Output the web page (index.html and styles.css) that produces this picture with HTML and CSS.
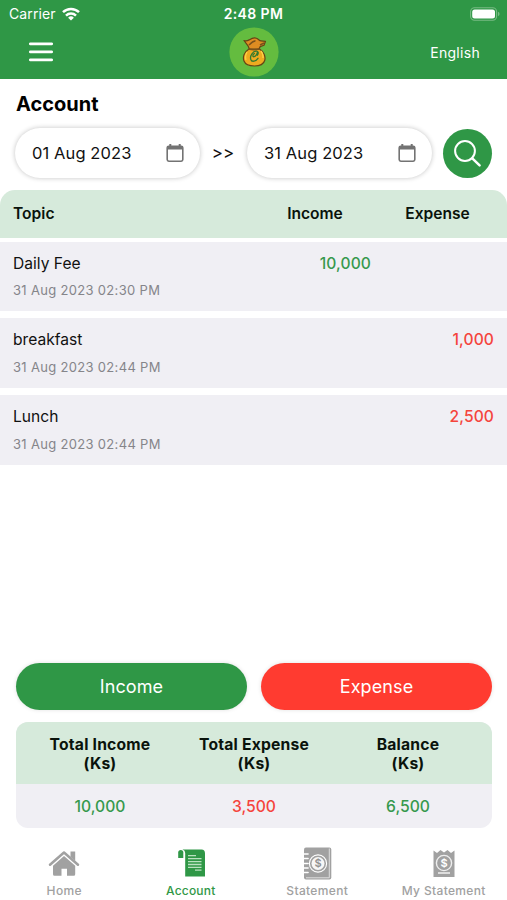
FILE: index.html
```html
<!DOCTYPE html>
<html lang="en">
<head>
<meta charset="utf-8">
<title>Account</title>
<link rel="stylesheet" href="styles.css">
</head>
<body>
<div class="app">
  <header class="top">
    <div class="status">
      <div class="carrier"><span>Carrier</span>
        <svg class="wifi" viewBox="0 0 18 14" width="18" height="14"><g fill="none" stroke="#fff" stroke-width="2.5"><path d="M1 5.2a11.6 11.6 0 0 1 16 0"/><path d="M4 8.6a7.2 7.2 0 0 1 10 0"/></g><path fill="#fff" d="M9 13.6 6.1 10.7a4.1 4.1 0 0 1 5.8 0z"/></svg>
      </div>
      <div class="clock">2:48 PM</div>
      <svg class="battery" viewBox="0 0 30 14" width="30" height="14"><rect x=".6" y=".8" width="26" height="12.4" rx="4" fill="none" stroke="#78bb84" stroke-width="1.1"/><rect x="2.2" y="2.4" width="22.8" height="9.2" rx="2.5" fill="#fff"/><path d="M28 4.8q1.6.6 1.6 2.2T28 9.2z" fill="#78bb84"/></svg>
    </div>
    <div class="bar">
      <div class="menu"><svg viewBox="0 0 24 20" width="24" height="20"><path d="M1.3 1.8h21.4M1.3 9.9h21.4M1.3 17.9h21.4" stroke="#fff" stroke-width="2.7" stroke-linecap="round"/></svg></div>
      <svg class="logo" viewBox="0 0 50 50" width="50" height="50">
        <circle cx="25" cy="25" r="24.6" fill="#64bc3f"/>
        <path d="M20 22c-5 3-6.500 8-5 12 1.500 4 5 5 10.500 5s9-1.500 10.200-5.500c1.200-4-1-9-5.200-11.500z" fill="#efaa20" stroke="#654415" stroke-width="1.200"/>
        <path d="M15 13.500c2.500 1 4 0 5.500-.8 2.500-1.600 4.800-2.400 7-1.400 2 .8 3 2.600 4.500 2.500l4.500.5-1.500 4-3.800 1.300-1.400 2.600H20.500l-1.300-3z" fill="#de8c22" stroke="#654415" stroke-width="1.200" stroke-linejoin="round"/>
        <path d="M20 18c2-2 4-3.800 6.500-4.200M19.500 22q5.500 1.300 11 0M31 18l4-2" fill="none" stroke="#78501b" stroke-width="1.500"/>
        <path d="M18 25q-2.300 4-1 8M32 24q2.500 3 2 7" fill="none" stroke="#ffd046" stroke-width="1.400"/>
        <path d="M28.400 28.200q2-3.400-.9-4c-3.600-.3-6.700 4.600-5.800 8 1 3.300 5 2.300 7.300-.9M25.400 26.500c-2 1.400-2 3.600-.3 3.200 1.700-.4 3-2.700 3.500-5" fill="none" stroke="#33792f" stroke-width="1.300" stroke-linecap="round"/>
      </svg>
      <div class="language">English</div>
    </div>
  </header>

  <main class="content">
    <h1 class="title">Account</h1>
    <div class="filter">
      <div class="date"><span>01 Aug 2023</span><svg class="calendar" viewBox="0 0 18 20" width="18" height="20"><rect x="1.200" y="3.200" width="15.600" height="15" rx="1.600" fill="none" stroke="#737373" stroke-width="1.600"/><path fill="#737373" d="M1 3.500h16V6.600H1zM3.300 1h2v3h-2zM12.700 1h2v3h-2z"/></svg></div>
      <div class="until">&gt;&gt;</div>
      <div class="date"><span>31 Aug 2023</span><svg class="calendar" viewBox="0 0 18 20" width="18" height="20"><rect x="1.200" y="3.200" width="15.600" height="15" rx="1.600" fill="none" stroke="#737373" stroke-width="1.600"/><path fill="#737373" d="M1 3.500h16V6.600H1zM3.300 1h2v3h-2zM12.700 1h2v3h-2z"/></svg></div>
      <div class="search"><svg viewBox="0 0 49 49" width="49" height="49"><circle cx="22" cy="22" r="9.900" fill="none" stroke="#fff" stroke-width="2"/><path d="m29.300 29.300 7.300 7" stroke="#fff" stroke-width="2.500" stroke-linecap="round"/></svg></div>
    </div>

    <section class="ledger">
      <div class="ledger-head"><span class="topic">Topic</span><span class="head-income">Income</span><span class="head-expense">Expense</span></div>
      <div class="entry"><div class="what"><div class="name">Daily Fee</div><div class="when">31 Aug 2023 02:30 PM</div></div><div class="amount green">10,000</div><div class="amount red"></div></div>
      <div class="entry"><div class="what"><div class="name">breakfast</div><div class="when">31 Aug 2023 02:44 PM</div></div><div class="amount green"></div><div class="amount red">1,000</div></div>
      <div class="entry"><div class="what"><div class="name">Lunch</div><div class="when">31 Aug 2023 02:44 PM</div></div><div class="amount green"></div><div class="amount red">2,500</div></div>
    </section>
  </main>

  <div class="actions"><div class="button income">Income</div><div class="button expense">Expense</div></div>
  <section class="summary">
    <div class="totals-head"><div>Total Income<br>(Ks)</div><div>Total Expense<br>(Ks)</div><div>Balance<br>(Ks)</div></div>
    <div class="totals"><div class="green">10,000</div><div class="red">3,500</div><div class="green">6,500</div></div>
  </section>

  <nav class="tabs">
    <div class="tab"><svg viewBox="0 0 32 34" width="32" height="34"><path d="M2 17.700 16 5.500l14 12.200" fill="none" stroke="#a1a1a1" stroke-width="2.500" stroke-linecap="round" stroke-linejoin="round"/><path d="M22.500 4.500h4.700v9.200l-4.700-4z" fill="#a1a1a1"/><path d="m16 9 11.200 9.700v8.600a1.500 1.500 0 0 1-1.500 1.500H19v-7h-5.500v7H6.500A1.500 1.500 0 0 1 5 27.300v-8.600z" fill="#a1a1a1"/></svg><span>Home</span></div>
    <div class="tab active"><svg viewBox="0 0 32 34" width="32" height="34"><path d="M3.200 11V5.500Q3.200 3 5.800 3 8.300 3 8.300 5.500V11z" fill="#2f9746"/><path d="M7.500 2.500h19q3.500.2 3.500 4V29.500H10.200V6Q10.200 3.200 7.500 2.500z" fill="#2f9746"/><path d="M13 8.700h8M13 11.700h13.500M13 14.600h13.500M13 17.500h13.500M13 20.300h13.500M20 23.200h6.500" stroke="#b9e1c0" stroke-width="1.300"/></svg><span>Account</span></div>
    <div class="tab"><svg viewBox="0 0 32 34" width="32" height="34"><rect x="3" y=".5" width="27.300" height="32" rx="2" fill="#a1a1a1"/><path d="M28.300 1.500v29.300H5" fill="none" stroke="#dedede" stroke-width="1"/><path d="M2.500 7h4.600M2.500 11.500h4.600M2.500 16.500h4.600M2.500 21h4.600M2.500 25.500h4.600" stroke="#fff" stroke-width="1.500" stroke-linecap="round"/><circle cx="17" cy="16.500" r="8.600" fill="none" stroke="#fff" stroke-width="1.100"/><circle cx="17" cy="16.500" r="6.500" fill="#f7f7f7"/><text x="17" y="20.400" class="coin gray">$</text></svg><span>Statement</span></div>
    <div class="tab"><svg viewBox="0 0 32 34" width="32" height="34"><path d="M5.500 3.500 9 6l3.500-3L16 5.500 19.500 3 23 6l3.500-2.500V30h-21z" fill="#a1a1a1"/><circle cx="16" cy="16" r="7.600" fill="none" stroke="#eee" stroke-width="1.400"/><text x="16" y="20" class="coin white">$</text><path d="M10 26h12" stroke="#f2f2f2" stroke-width="1.500"/></svg><span>My Statement</span></div>
  </nav>
</div>
</body>
</html>
```

FILE: styles.css
```css
* { box-sizing: border-box; }
body { margin: 0; background: #fff; color: #111; font-family: Inter, "Liberation Sans", sans-serif; font-size: 16px; }
svg { display: block; flex: none; }
.app { width: 507px; height: 900px; display: flex; flex-direction: column; overflow: hidden; }
.top { height: 79px; background: #2f9746; color: #fff; }
.status { height: 27px; display: grid; grid-template-columns: 1fr auto 1fr; align-items: center; padding: 0 7px 0 9px; }
.carrier { display: flex; align-items: center; gap: 6px; font-size: 14px; letter-spacing: .1px; }
.clock { margin-left: -2px; font-size: 14px; font-weight: 600; letter-spacing: .4px; }
.battery { justify-self: end; }
.bar { height: 50px; display: grid; grid-template-columns: 1fr 50px 1fr; align-items: center; padding: 0 27px 0 29px; }
.logo { margin-left: -1px; }
.language { justify-self: end; font-size: 14px; letter-spacing: .3px; }
.content { flex: 1; }
.title { margin: 0; padding: 13px 16px 0; height: 48px; font-size: 20px; line-height: 24px; font-weight: 650; color: #000; }
.filter { display: flex; align-items: center; height: 52px; padding: 0 15px; }
.date { width: 185px; height: 50px; border-radius: 25px; box-shadow: 0 0 5px rgba(0,0,0,.24); display: flex; align-items: center; justify-content: space-between; padding: 0 16px 0 17px; background: #fff; font-size: 16.500px; letter-spacing: .1px; }
.until { width: 47px; padding-right: 1px; text-align: center; font-size: 17px; }
.search { width: 49px; height: 49px; margin-left: auto; background: #2f9746; border-radius: 50%; }
.ledger { margin-top: 10.500px; display: flex; flex-direction: column; gap: 7.500px; }
.ledger-head { height: 48px; margin-bottom: -3.500px; background: #d6eadb; border-radius: 15px 15px 0 0; display: grid; grid-template-columns: 262px 106px 139px; align-items: center; font-weight: 600; font-size: 15.600px; color: #0a130c; }
.topic { padding-left: 13px; }
.head-income, .head-expense { text-align: center; }
.entry { height: 69.400px; background: #f0eff4; padding: 12px 13px 0; display: grid; grid-template-columns: 1fr 101px 123px; align-items: start; line-height: 20px; font-size: 15.600px; }
.when { margin-top: 7.500px; font-size: 13px; line-height: 18px; color: #85858a; letter-spacing: .32px; }
.amount { text-align: right; font-weight: 500; letter-spacing: .1px; }
.green { color: #36994d; }
.red { color: #f5443c; }
.actions { display: grid; grid-template-columns: 1fr 1fr; gap: 14px; padding: 0 15px 0 16px; height: 47px; }
.button { display: flex; align-items: center; justify-content: center; border-radius: 24px; color: #fff; font-size: 18px; letter-spacing: .1px; box-shadow: 0 0 4px rgba(0,0,0,.12); }
.income { background: #2f9746; }
.expense { background: #ff3b30; }
.summary { margin: 12px 15px 0 16px; height: 106px; border-radius: 12px; overflow: hidden; background: #f0eff4; text-align: center; }
.totals-head { height: 62px; padding: 12.500px 7px 0; background: #d6eadb; display: grid; grid-template-columns: repeat(3, 1fr); font-weight: 650; font-size: 15.700px; line-height: 19px; letter-spacing: .2px; color: #0a130c; }
.totals { height: 44px; display: grid; grid-template-columns: repeat(3, 1fr); padding: 0 7px; align-items: center; font-weight: 500; font-size: 15.700px; }
.tabs { height: 72px; display: grid; grid-template-columns: repeat(4, 1fr); padding-left: 1px; }
.tab { display: flex; flex-direction: column; align-items: center; padding-top: 19px; gap: 2px; font-size: 12px; line-height: 15px; font-weight: 500; color: #a1a1a1; letter-spacing: .35px; }
.active { color: #2f9746; letter-spacing: .2px; }
.coin { font: 600 11px Inter, sans-serif; text-anchor: middle; letter-spacing: 0; }
.gray { fill: #929292; }
.white { fill: #fff; }
```
